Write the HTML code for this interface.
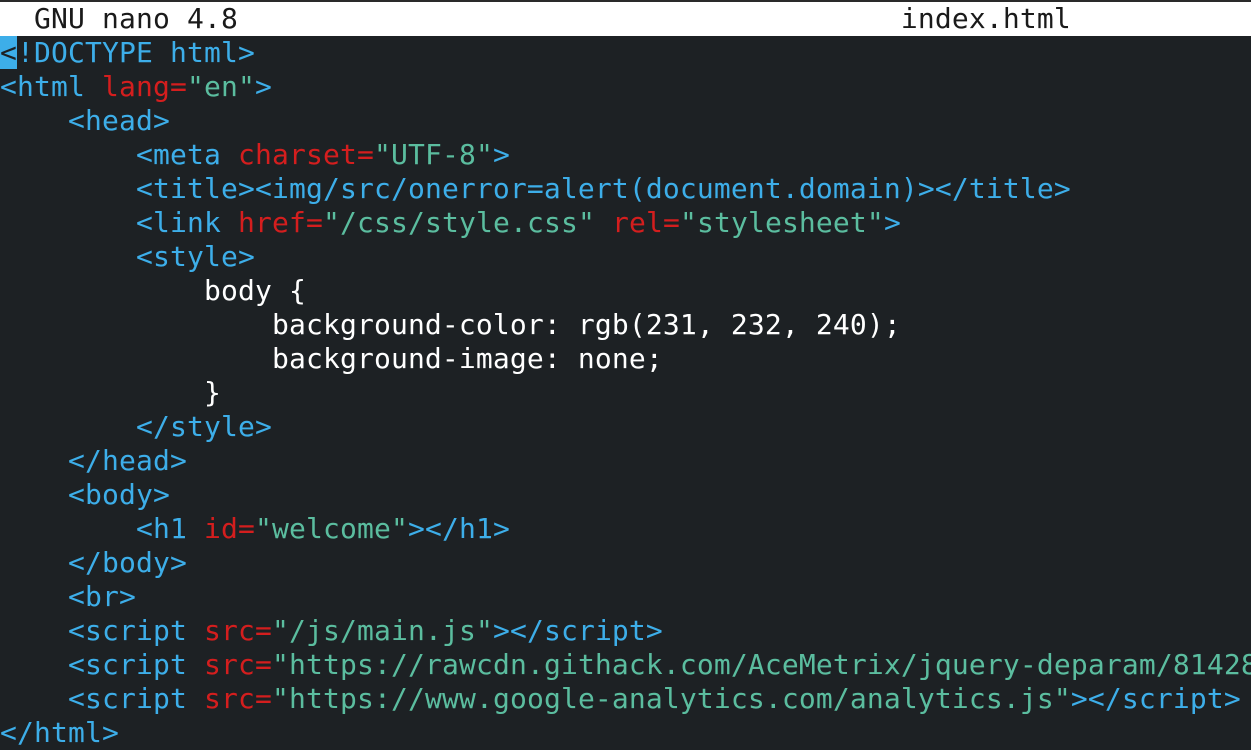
<!DOCTYPE html>
<html><head><style>
html,body{margin:0;padding:0;}
body{width:1251px;height:742px;overflow:hidden;background:#1d2124;position:relative;font-family:"DejaVu Sans Mono","Liberation Mono",monospace;font-size:28px;letter-spacing:0.14px;}
.top{position:absolute;left:0;top:0;width:1251px;height:2px;background:#2a2a2a;}
.hdr{position:absolute;left:0;top:2px;width:1251px;height:34px;background:#fff;color:#1a1a1a;line-height:34px;white-space:pre;}
pre{position:absolute;left:0;top:36px;margin:0;font:inherit;letter-spacing:0.14px;line-height:34px;color:#fff;white-space:pre;}
.b{color:#3daee9}.r{color:#d41e1e}.g{color:#5bbd9f}
.cur{background:#3daee9;color:#1d2124}
</style></head><body>
<div class="top"></div>
<div class="hdr">  GNU nano 4.8                                       index.html</div>
<pre><span class="cur">&lt;</span><span class="b">!DOCTYPE html&gt;</span>
<span class="b">&lt;html </span><span class="r">lang=</span><span class="g">"en"</span><span class="b">&gt;</span>
    <span class="b">&lt;head&gt;</span>
        <span class="b">&lt;meta </span><span class="r">charset=</span><span class="g">"UTF-8"</span><span class="b">&gt;</span>
        <span class="b">&lt;title&gt;&lt;img/src/onerror=alert(document.domain)&gt;&lt;/title&gt;</span>
        <span class="b">&lt;link </span><span class="r">href=</span><span class="g">"/css/style.css"</span> <span class="r">rel=</span><span class="g">"stylesheet"</span><span class="b">&gt;</span>
        <span class="b">&lt;style&gt;</span>
            body {
                background-color: rgb(231, 232, 240);
                background-image: none;
            }
        <span class="b">&lt;/style&gt;</span>
    <span class="b">&lt;/head&gt;</span>
    <span class="b">&lt;body&gt;</span>
        <span class="b">&lt;h1 </span><span class="r">id=</span><span class="g">"welcome"</span><span class="b">&gt;&lt;/h1&gt;</span>
    <span class="b">&lt;/body&gt;</span>
    <span class="b">&lt;br&gt;</span>
    <span class="b">&lt;script </span><span class="r">src=</span><span class="g">"/js/main.js"</span><span class="b">&gt;&lt;/script&gt;</span>
    <span class="b">&lt;script </span><span class="r">src=</span><span class="g">"https://rawcdn.githack.com/AceMetrix/jquery-deparam/81428</span>
    <span class="b">&lt;script </span><span class="r">src=</span><span class="g">"https://www.google-analytics.com/analytics.js"</span><span class="b">&gt;&lt;/script&gt;</span>
<span class="b">&lt;/html&gt;</span></pre>
</body></html>
